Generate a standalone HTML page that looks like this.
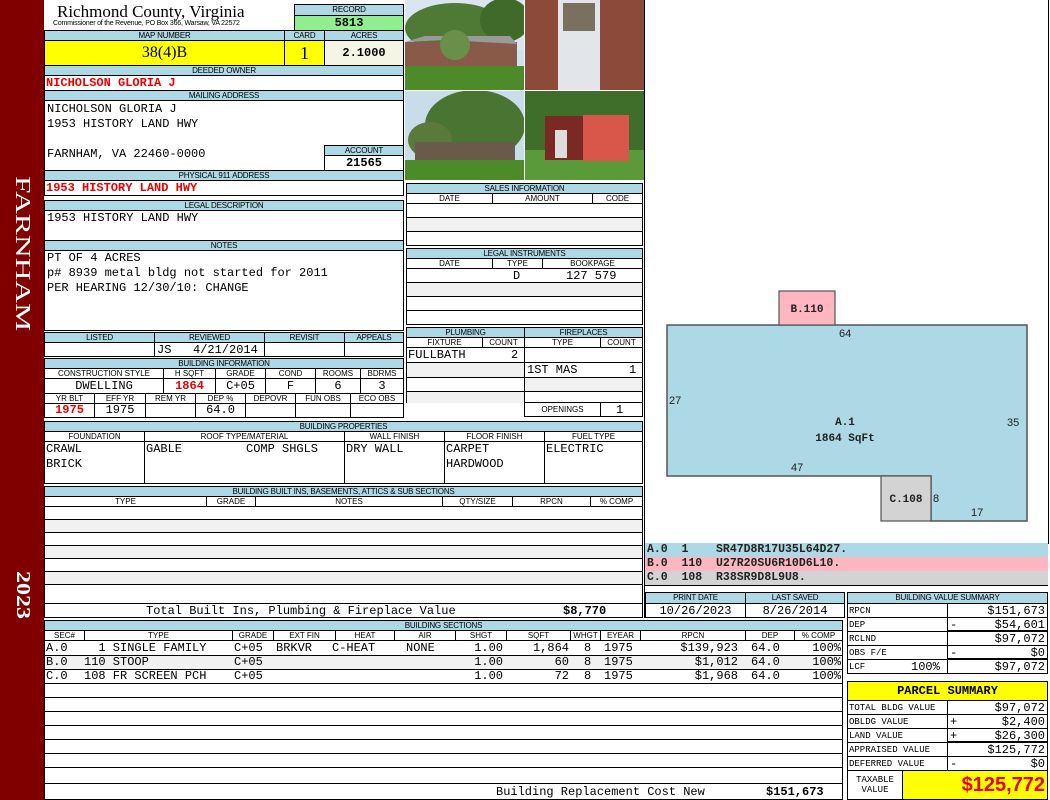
<!DOCTYPE html>
<html><head><meta charset="utf-8"><style>
*{box-sizing:border-box;margin:0;padding:0}
body{width:1050px;height:800px;background:#fff;position:relative;overflow:hidden;font-family:"Liberation Mono",monospace;color:#000}
.a{position:absolute}
.b{position:absolute;border:1px solid #000;background:#fff}
.h{position:absolute;background:#add8e6;border:1px solid #000;font:8px/9px "Liberation Sans",sans-serif;text-align:center;white-space:nowrap;overflow:hidden;letter-spacing:-.2px}
.l{position:absolute;border:1px solid #000;font:8px/9px "Liberation Sans",sans-serif;text-align:center;white-space:nowrap;overflow:hidden;background:#fff}
.m{position:absolute;font:12px/14px "Liberation Mono",monospace;white-space:nowrap}
.r{color:#e00;font-weight:bold}
.vl{position:absolute;width:1px;background:#000}
.g{background:#f1f1f1}
.rt{text-align:right}
</style></head><body>
<!-- sidebar -->
<div class="a" style="left:0;top:0;width:44px;height:800px;background:#800000"></div>
<div class="a" style="left:9px;top:178px;width:28px;height:152px;color:#fff;font:21px/28px 'Liberation Serif',serif;writing-mode:vertical-rl;text-align:center;transform:scaleY(1.5)">FARNHAM</div>
<div class="a" style="left:9px;top:571px;width:28px;height:48px;color:#fff;font:bold 20px/28px 'Liberation Serif',serif;writing-mode:vertical-rl;text-align:center;transform:scaleY(1.2)">2023</div>

<!-- header -->
<div class="a" style="left:57px;top:3px;font:17px/18px 'Liberation Serif',serif">Richmond County, Virginia</div>
<div class="a" style="left:53px;top:20px;font:7px/8px 'Liberation Sans',sans-serif;letter-spacing:-.2px">Commissioner of the Revenue, PO Box 366, Warsaw, VA 22572</div>
<div class="h" style="left:294px;top:4px;width:110px;height:12px">RECORD</div>
<div class="a" style="left:294px;top:15px;width:110px;height:16px;background:#90ee90;border:1px solid #000;font:bold 12px/14px 'Liberation Mono';text-align:center">5813</div>
<div class="h" style="left:44px;top:30px;width:241px;height:11px">MAP NUMBER</div>
<div class="h" style="left:284px;top:30px;width:41px;height:11px">CARD</div>
<div class="h" style="left:324px;top:30px;width:80px;height:11px">ACRES</div>
<div class="a" style="left:44px;top:40px;width:241px;height:26px;background:#ff0;border:1px solid #000;font:16px/24px 'Liberation Serif',serif;text-align:center">38(4)B</div>
<div class="a" style="left:284px;top:40px;width:41px;height:26px;background:#ff0;border:1px solid #000;font:18px/24px 'Liberation Serif',serif;text-align:center">1</div>
<div class="a" style="left:324px;top:40px;width:80px;height:26px;background:#f5f5e6;border:1px solid #000;font:bold 12px/24px 'Liberation Mono';text-align:center">2.1000</div>
<div class="h" style="left:44px;top:65px;width:360px;height:11px">DEEDED OWNER</div>
<div class="b" style="left:44px;top:75px;width:360px;height:16px"></div>
<div class="m r" style="left:46px;top:76px">NICHOLSON GLORIA J</div>
<div class="h" style="left:44px;top:90px;width:360px;height:11px">MAILING ADDRESS</div>
<div class="b" style="left:44px;top:100px;width:360px;height:71px"></div>
<div class="m" style="left:47px;top:102px;line-height:15px">NICHOLSON GLORIA J<br>1953 HISTORY LAND HWY<br><br>FARNHAM, VA 22460-0000</div>
<div class="h" style="left:324px;top:145px;width:80px;height:11px">ACCOUNT</div>
<div class="b" style="left:324px;top:155px;width:80px;height:16px;font:bold 12px/14px 'Liberation Mono';text-align:center">21565</div>
<div class="h" style="left:44px;top:170px;width:360px;height:11px">PHYSICAL 911 ADDRESS</div>
<div class="b" style="left:44px;top:180px;width:360px;height:16px"></div>
<div class="m r" style="left:46px;top:181px">1953 HISTORY LAND HWY</div>
<div class="h" style="left:44px;top:200px;width:360px;height:11px">LEGAL DESCRIPTION</div>
<div class="b" style="left:44px;top:210px;width:360px;height:31px"></div>
<div class="m" style="left:47px;top:211px">1953 HISTORY LAND HWY</div>
<div class="h" style="left:44px;top:240px;width:360px;height:11px">NOTES</div>
<div class="b" style="left:44px;top:250px;width:360px;height:81px"></div>
<div class="m" style="left:47px;top:251px;line-height:15px">PT OF 4 ACRES<br>p# 8939 metal bldg not started for 2011<br>PER HEARING 12/30/10: CHANGE</div>

<!-- listed -->
<div class="h" style="left:44px;top:332px;width:111px;height:11px">LISTED</div>
<div class="h" style="left:154px;top:332px;width:111px;height:11px">REVIEWED</div>
<div class="h" style="left:264px;top:332px;width:81px;height:11px">REVISIT</div>
<div class="h" style="left:344px;top:332px;width:60px;height:11px">APPEALS</div>
<div class="b" style="left:44px;top:342px;width:111px;height:15px"></div>
<div class="b" style="left:154px;top:342px;width:111px;height:15px"></div>
<div class="b" style="left:264px;top:342px;width:81px;height:15px"></div>
<div class="b" style="left:344px;top:342px;width:60px;height:15px"></div>
<div class="m" style="left:157px;top:343px">JS&nbsp;&nbsp;&nbsp;4/21/2014</div>

<!-- building info -->
<div class="h" style="left:44px;top:358px;width:360px;height:11px">BUILDING INFORMATION</div>
<div class="l" style="left:44px;top:368px;width:120px;height:11px">CONSTRUCTION STYLE</div>
<div class="l" style="left:163px;top:368px;width:53px;height:11px">H SQFT</div>
<div class="l" style="left:215px;top:368px;width:51px;height:11px">GRADE</div>
<div class="l" style="left:265px;top:368px;width:51px;height:11px">COND</div>
<div class="l" style="left:315px;top:368px;width:46px;height:11px">ROOMS</div>
<div class="l" style="left:360px;top:368px;width:44px;height:11px">BDRMS</div>
<div class="b" style="left:44px;top:378px;width:120px;height:16px"></div>
<div class="b" style="left:163px;top:378px;width:53px;height:16px"></div>
<div class="b" style="left:215px;top:378px;width:51px;height:16px"></div>
<div class="b" style="left:265px;top:378px;width:51px;height:16px"></div>
<div class="b" style="left:315px;top:378px;width:46px;height:16px"></div>
<div class="b" style="left:360px;top:378px;width:44px;height:16px"></div>
<div class="m" style="left:44px;top:379px;width:120px;text-align:center">DWELLING</div>
<div class="m r" style="left:163px;top:379px;width:53px;text-align:center">1864</div>
<div class="m" style="left:215px;top:379px;width:51px;text-align:center">C+05</div>
<div class="m" style="left:265px;top:379px;width:51px;text-align:center">F</div>
<div class="m" style="left:315px;top:379px;width:46px;text-align:center">6</div>
<div class="m" style="left:360px;top:379px;width:44px;text-align:center">3</div>
<div class="l" style="left:44px;top:393px;width:51px;height:11px">YR BLT</div>
<div class="l" style="left:94px;top:393px;width:52px;height:11px">EFF YR</div>
<div class="l" style="left:145px;top:393px;width:51px;height:11px">REM YR</div>
<div class="l" style="left:195px;top:393px;width:51px;height:11px">DEP %</div>
<div class="l" style="left:245px;top:393px;width:51px;height:11px">DEPOVR</div>
<div class="l" style="left:295px;top:393px;width:56px;height:11px">FUN OBS</div>
<div class="l" style="left:350px;top:393px;width:54px;height:11px">ECO OBS</div>
<div class="b" style="left:44px;top:403px;width:51px;height:15px"></div>
<div class="b" style="left:94px;top:403px;width:52px;height:15px"></div>
<div class="b" style="left:145px;top:403px;width:51px;height:15px"></div>
<div class="b" style="left:195px;top:403px;width:51px;height:15px"></div>
<div class="b" style="left:245px;top:403px;width:51px;height:15px"></div>
<div class="b" style="left:295px;top:403px;width:56px;height:15px"></div>
<div class="b" style="left:350px;top:403px;width:54px;height:15px"></div>
<div class="m r" style="left:44px;top:403px;width:51px;text-align:center">1975</div>
<div class="m" style="left:94px;top:403px;width:52px;text-align:center">1975</div>
<div class="m" style="left:195px;top:403px;width:51px;text-align:center">64.0</div>

<!-- photos -->
<svg class="a" style="left:405px;top:0" width="240" height="182">
<rect x="0" y="0" width="119" height="90" fill="#cfe0ee"/><rect x="0" y="0" width="119" height="50" fill="#d9e6ef"/>
<ellipse cx="50" cy="28" rx="50" ry="25" fill="#4f7a35"/><ellipse cx="100" cy="20" rx="25" ry="22" fill="#3f6a2a"/>
<rect x="0" y="42" width="112" height="28" fill="#8a5a48"/><polygon points="0,42 40,40 112,44 105,36 20,36" fill="#9a9a9a"/>
<rect x="0" y="66" width="119" height="24" fill="#4c8a2a"/><ellipse cx="50" cy="45" rx="15" ry="15" fill="#6a8f4a"/>
<rect x="120" y="0" width="119" height="90" fill="#8c4a3a"/><rect x="153" y="0" width="42" height="90" fill="#e2e6ea"/><rect x="158" y="3" width="32" height="28" fill="#7a7060"/>
<rect x="0" y="91" width="119" height="89" fill="#c8dcea"/><ellipse cx="70" cy="125" rx="50" ry="35" fill="#4a7432"/><ellipse cx="25" cy="140" rx="22" ry="18" fill="#5a7a3a"/>
<rect x="10" y="142" width="100" height="22" fill="#6a5a4a"/><rect x="0" y="160" width="119" height="20" fill="#4c8a2a"/>
<rect x="120" y="91" width="119" height="89" fill="#3f6e2a"/><rect x="120" y="150" width="119" height="30" fill="#5a9a3a"/>
<rect x="140" y="116" width="40" height="44" fill="#7a2a22"/><rect x="178" y="115" width="46" height="46" fill="#d9574a"/><rect x="150" y="130" width="12" height="28" fill="#ddd"/>
<rect x="119" y="0" width="1" height="182" fill="#fff"/><rect x="0" y="90" width="240" height="1" fill="#fff"/>
</svg>

<!-- sales -->
<div class="h" style="left:406px;top:183px;width:237px;height:11px">SALES INFORMATION</div>
<div class="l" style="left:406px;top:193px;width:87px;height:11px">DATE</div>
<div class="l" style="left:492px;top:193px;width:101px;height:11px">AMOUNT</div>
<div class="l" style="left:592px;top:193px;width:51px;height:11px">CODE</div>
<div class="b" style="left:406px;top:203px;width:237px;height:15px"></div>
<div class="b g" style="left:406px;top:217px;width:237px;height:15px"></div>
<div class="b" style="left:406px;top:231px;width:237px;height:15px"></div>
<div class="h" style="left:406px;top:248px;width:237px;height:11px">LEGAL INSTRUMENTS</div>
<div class="l" style="left:406px;top:258px;width:87px;height:11px">DATE</div>
<div class="l" style="left:492px;top:258px;width:51px;height:11px">TYPE</div>
<div class="l" style="left:542px;top:258px;width:101px;height:11px">BOOKPAGE</div>
<div class="b" style="left:406px;top:268px;width:237px;height:15px"></div>
<div class="m" style="left:513px;top:269px">D</div><div class="m" style="left:566px;top:269px">127 579</div>
<div class="b g" style="left:406px;top:282px;width:237px;height:15px"></div>
<div class="b" style="left:406px;top:296px;width:237px;height:15px"></div>
<div class="b" style="left:406px;top:310px;width:237px;height:15px"></div>

<!-- plumbing -->
<div class="h" style="left:406px;top:327px;width:119px;height:11px">PLUMBING</div>
<div class="h" style="left:524px;top:327px;width:119px;height:11px">FIREPLACES</div>
<div class="l" style="left:406px;top:337px;width:77px;height:11px">FIXTURE</div>
<div class="l" style="left:482px;top:337px;width:43px;height:11px">COUNT</div>
<div class="l" style="left:524px;top:337px;width:77px;height:11px">TYPE</div>
<div class="l" style="left:600px;top:337px;width:43px;height:11px">COUNT</div>
<div class="b" style="left:406px;top:347px;width:119px;height:16px"></div>
<div class="b g" style="left:406px;top:362px;width:119px;height:16px"></div>
<div class="b" style="left:406px;top:377px;width:119px;height:15px"></div>
<div class="b g" style="left:406px;top:391px;width:119px;height:12px;border-bottom:none"></div>
<div class="m" style="left:408px;top:348px">FULLBATH</div><div class="m" style="left:511px;top:348px">2</div>
<div class="b" style="left:524px;top:347px;width:119px;height:16px"></div>
<div class="b" style="left:524px;top:362px;width:119px;height:16px"></div>
<div class="b g" style="left:524px;top:377px;width:119px;height:15px"></div>
<div class="b" style="left:524px;top:391px;width:119px;height:12px"></div>
<div class="m" style="left:527px;top:363px">1ST MAS</div><div class="m" style="left:629px;top:363px">1</div>
<div class="l" style="left:524px;top:402px;width:77px;height:15px;font-size:8px;line-height:13px">OPENINGS</div>
<div class="b" style="left:600px;top:402px;width:43px;height:15px"></div><div class="m" style="left:616px;top:403px">1</div>

<!-- building properties -->
<div class="h" style="left:44px;top:421px;width:599px;height:11px">BUILDING PROPERTIES</div>
<div class="l" style="left:44px;top:431px;width:101px;height:11px">FOUNDATION</div>
<div class="l" style="left:144px;top:431px;width:201px;height:11px">ROOF TYPE/MATERIAL</div>
<div class="l" style="left:344px;top:431px;width:101px;height:11px">WALL FINISH</div>
<div class="l" style="left:444px;top:431px;width:101px;height:11px">FLOOR FINISH</div>
<div class="l" style="left:544px;top:431px;width:99px;height:11px">FUEL TYPE</div>
<div class="b" style="left:44px;top:441px;width:101px;height:43px"></div>
<div class="b" style="left:144px;top:441px;width:201px;height:43px"></div>
<div class="b" style="left:344px;top:441px;width:101px;height:43px"></div>
<div class="b" style="left:444px;top:441px;width:101px;height:43px"></div>
<div class="b" style="left:544px;top:441px;width:99px;height:43px"></div>
<div class="m" style="left:46px;top:442px;line-height:15px">CRAWL<br>BRICK</div>
<div class="m" style="left:146px;top:442px">GABLE</div><div class="m" style="left:246px;top:442px">COMP SHGLS</div>
<div class="m" style="left:346px;top:442px">DRY WALL</div>
<div class="m" style="left:446px;top:442px;line-height:15px">CARPET<br>HARDWOOD</div>
<div class="m" style="left:546px;top:442px">ELECTRIC</div>

<!-- built ins -->
<div class="h" style="left:44px;top:486px;width:599px;height:11px">BUILDING BUILT INS, BASEMENTS, ATTICS &amp; SUB SECTIONS</div>
<div class="l" style="left:44px;top:496px;width:163px;height:11px">TYPE</div>
<div class="l" style="left:206px;top:496px;width:50px;height:11px">GRADE</div>
<div class="l" style="left:255px;top:496px;width:188px;height:11px">NOTES</div>
<div class="l" style="left:442px;top:496px;width:71px;height:11px">QTY/SIZE</div>
<div class="l" style="left:512px;top:496px;width:79px;height:11px">RPCN</div>
<div class="l" style="left:590px;top:496px;width:53px;height:11px">% COMP</div>
<div class="b" style="left:44px;top:506px;width:599px;height:14px"></div>
<div class="b g" style="left:44px;top:519px;width:599px;height:14px"></div>
<div class="b" style="left:44px;top:532px;width:599px;height:14px"></div>
<div class="b g" style="left:44px;top:545px;width:599px;height:14px"></div>
<div class="b" style="left:44px;top:558px;width:599px;height:14px"></div>
<div class="b g" style="left:44px;top:571px;width:599px;height:14px"></div>
<div class="b" style="left:44px;top:584px;width:599px;height:20px"></div>
<div class="b" style="left:44px;top:603px;width:599px;height:15px"></div>
<div class="m" style="left:146px;top:604px">Total Built Ins, Plumbing &amp; Fireplace Value</div>
<div class="m" style="left:563px;top:604px;font-weight:bold">$8,770</div>

<!-- building sections -->
<div class="h" style="left:44px;top:620px;width:799px;height:11px">BUILDING SECTIONS</div>
<div class="l" style="left:44px;top:630px;width:41px;height:11px">SEC#</div>
<div class="l" style="left:84px;top:630px;width:149px;height:11px">TYPE</div>
<div class="l" style="left:232px;top:630px;width:42px;height:11px">GRADE</div>
<div class="l" style="left:273px;top:630px;width:63px;height:11px">EXT FIN</div>
<div class="l" style="left:335px;top:630px;width:60px;height:11px">HEAT</div>
<div class="l" style="left:394px;top:630px;width:62px;height:11px">AIR</div>
<div class="l" style="left:455px;top:630px;width:52px;height:11px">SHGT</div>
<div class="l" style="left:506px;top:630px;width:65px;height:11px">SQFT</div>
<div class="l" style="left:570px;top:630px;width:31px;height:11px">WHGT</div>
<div class="l" style="left:600px;top:630px;width:41px;height:11px">EYEAR</div>
<div class="l" style="left:640px;top:630px;width:106px;height:11px">RPCN</div>
<div class="l" style="left:745px;top:630px;width:50px;height:11px">DEP</div>
<div class="l" style="left:794px;top:630px;width:49px;height:11px">% COMP</div>
<div class="b" style="left:44px;top:640px;width:799px;height:16px"></div>
<div class="b g" style="left:44px;top:655px;width:799px;height:15px"></div>
<div class="b" style="left:44px;top:669px;width:799px;height:15px"></div>
<div class="b" style="left:44px;top:683px;width:799px;height:15px"></div>
<div class="b" style="left:44px;top:697px;width:799px;height:15px"></div>
<div class="b" style="left:44px;top:711px;width:799px;height:15px"></div>
<div class="b" style="left:44px;top:725px;width:799px;height:15px"></div>
<div class="b" style="left:44px;top:739px;width:799px;height:15px"></div>
<div class="b" style="left:44px;top:753px;width:799px;height:15px"></div>
<div class="b" style="left:44px;top:767px;width:799px;height:17px"></div>
<div class="b" style="left:44px;top:783px;width:799px;height:17px"></div>
<div class="m" style="left:46px;top:641px;line-height:14px">A.0<br>B.0<br>C.0</div>
<div class="m" style="left:84px;top:641px;line-height:14px;white-space:pre">  1 SINGLE FAMILY
110 STOOP
108 FR SCREEN PCH</div>
<div class="m" style="left:234px;top:641px;line-height:14px">C+05<br>C+05<br>C+05</div>
<div class="m" style="left:276px;top:641px">BRKVR</div>
<div class="m" style="left:332px;top:641px">C-HEAT</div>
<div class="m" style="left:406px;top:641px">NONE</div>
<div class="m rt" style="left:450px;width:53px;top:641px;line-height:14px">1.00<br>1.00<br>1.00</div>
<div class="m rt" style="left:510px;width:59px;top:641px;line-height:14px">1,864<br>60<br>72</div>
<div class="m" style="left:584px;top:641px;line-height:14px">8<br>8<br>8</div>
<div class="m" style="left:604px;top:641px;line-height:14px">1975<br>1975<br>1975</div>
<div class="m rt" style="left:656px;width:82px;top:641px;line-height:14px">$139,923<br>$1,012<br>$1,968</div>
<div class="m" style="left:751px;top:641px;line-height:14px">64.0<br>64.0<br>64.0</div>
<div class="m rt" style="left:795px;width:46px;top:641px;line-height:14px">100%<br>100%<br>100%</div>
<div class="m" style="left:496px;top:785px">Building Replacement Cost New</div>
<div class="m" style="left:766px;top:785px;font-weight:bold">$151,673</div>

<!-- sketch -->
<div class="a" style="left:644px;top:0;width:405px;height:544px;border:1px solid #000;border-top:none"></div>
<svg class="a" style="left:645px;top:0" width="404" height="543">
<polygon points="22,325 382,325 382,521 286,521 286,476 22,476" fill="#add8e6" stroke="#555" stroke-width="1.5"/>
<rect x="134" y="291" width="56" height="34" fill="#ffb6c1" stroke="#555" stroke-width="1.2"/>
<rect x="236" y="476" width="50" height="45" fill="#d3d3d3" stroke="#555" stroke-width="1.2"/>
<g font-family="Liberation Sans" font-size="11" fill="#222">
<text x="194" y="337">64</text><text x="24" y="404">27</text><text x="362" y="426">35</text><text x="146" y="471">47</text><text x="288" y="502">8</text><text x="326" y="516">17</text></g>
<g font-family="Liberation Mono" font-size="11" font-weight="bold" fill="#222" text-anchor="middle">
<text x="162" y="312">B.110</text><text x="200" y="425">A.1</text><text x="200" y="441">1864 SqFt</text><text x="261" y="502">C.108</text></g>
</svg>
<div class="a" style="left:645px;top:543px;width:403px;height:14px;background:#add8e6"></div>
<div class="a" style="left:645px;top:557px;width:403px;height:14px;background:#ffb6c1"></div>
<div class="a" style="left:645px;top:571px;width:403px;height:15px;background:#d3d3d3;border-bottom:1px solid #000"></div>
<div class="m" style="left:647px;top:543px;font-weight:bold;font-size:11.5px;white-space:pre;color:#222">A.0  1    SR47D8R17U35L64D27.
B.0  110  U27R20SU6R10D6L10.
C.0  108  R38SR9D8L9U8.</div>
<div class="vl" style="left:644px;top:543px;height:75px"></div>

<!-- print date -->
<div class="h" style="left:645px;top:592px;width:101px;height:12px">PRINT DATE</div>
<div class="h" style="left:745px;top:592px;width:100px;height:12px">LAST SAVED</div>
<div class="b" style="left:645px;top:603px;width:101px;height:15px"></div>
<div class="b" style="left:745px;top:603px;width:100px;height:15px"></div>
<div class="m" style="left:645px;top:604px;width:101px;text-align:center">10/26/2023</div>
<div class="m" style="left:745px;top:604px;width:100px;text-align:center">8/26/2014</div>

<!-- building value summary -->
<div class="h" style="left:847px;top:592px;width:201px;height:12px">BUILDING VALUE SUMMARY</div>
<div class="b" style="left:847px;top:603px;width:101px;height:15px"></div><div class="b" style="left:947px;top:603px;width:101px;height:15px"></div>
<div class="b" style="left:847px;top:617px;width:101px;height:15px"></div><div class="b" style="left:947px;top:617px;width:101px;height:15px;border-bottom:2px solid #000"></div>
<div class="b" style="left:847px;top:631px;width:101px;height:15px"></div><div class="b" style="left:947px;top:631px;width:101px;height:15px"></div>
<div class="b" style="left:847px;top:645px;width:101px;height:15px"></div><div class="b" style="left:947px;top:645px;width:101px;height:15px;border-bottom:2px solid #000"></div>
<div class="b" style="left:847px;top:659px;width:101px;height:15px"></div><div class="b" style="left:947px;top:659px;width:101px;height:15px"></div>
<div class="a" style="left:849px;top:604px;font:9px/14px 'Liberation Mono';">RPCN<br>DEP<br>RCLND<br>OBS F/E<br>LCF</div>
<div class="m" style="left:911px;top:660px">100%</div>
<div class="m" style="left:950px;top:604px;width:95px;text-align:right;line-height:14px">$151,673<br>$54,601<br>$97,072<br>$0<br>$97,072</div>
<div class="m" style="left:950px;top:618px">-</div><div class="m" style="left:950px;top:646px">-</div>

<!-- parcel summary -->
<div class="a" style="left:847px;top:681px;width:201px;height:20px;background:#ff0;border:1px solid #000;font:bold 12px/18px 'Liberation Mono';text-align:center">PARCEL SUMMARY</div>
<div class="b" style="left:847px;top:700px;width:101px;height:15px"></div><div class="b" style="left:947px;top:700px;width:101px;height:15px"></div>
<div class="b" style="left:847px;top:714px;width:101px;height:15px"></div><div class="b" style="left:947px;top:714px;width:101px;height:15px"></div>
<div class="b" style="left:847px;top:728px;width:101px;height:15px"></div><div class="b" style="left:947px;top:728px;width:101px;height:15px;border-bottom:2px solid #000"></div>
<div class="b" style="left:847px;top:742px;width:101px;height:15px"></div><div class="b" style="left:947px;top:742px;width:101px;height:15px"></div>
<div class="b" style="left:847px;top:756px;width:101px;height:15px"></div><div class="b" style="left:947px;top:756px;width:101px;height:15px"></div>
<div class="a" style="left:849px;top:701px;font:9px/14px 'Liberation Mono';">TOTAL BLDG VALUE<br>OBLDG VALUE<br>LAND VALUE<br>APPRAISED VALUE<br>DEFERRED VALUE</div>
<div class="m" style="left:950px;top:701px;width:95px;text-align:right;line-height:14px">$97,072<br>$2,400<br>$26,300<br>$125,772<br>$0</div>
<div class="m" style="left:950px;top:715px">+</div><div class="m" style="left:950px;top:729px">+</div><div class="m" style="left:950px;top:757px">-</div>
<div class="b" style="left:847px;top:770px;width:56px;height:30px;font:9px/10px 'Liberation Mono';text-align:center;padding-top:4px">TAXABLE<br>VALUE</div>
<div class="a" style="left:902px;top:770px;width:146px;height:30px;background:#ff0;border:1px solid #000;color:#e00;font:bold 20px/28px 'Liberation Sans',sans-serif;text-align:right;padding-right:2px">$125,772</div>
</body></html>
